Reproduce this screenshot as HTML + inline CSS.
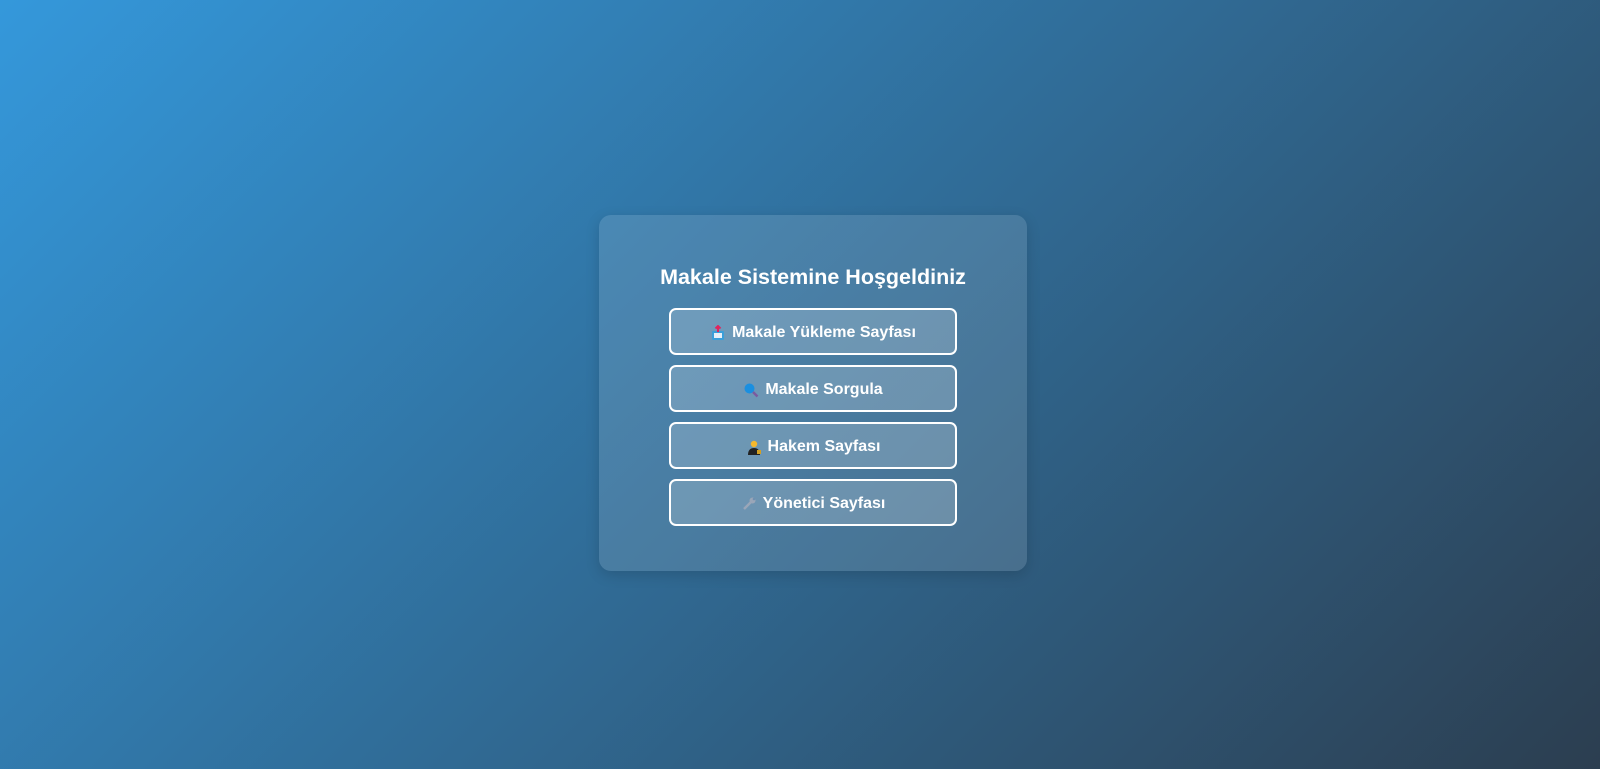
<!DOCTYPE html>
<html><head><meta charset="utf-8"><style>
html,body{margin:0;width:1600px;height:769px;overflow:hidden}
body{background:linear-gradient(135deg,#3498db 0%,#2c3e50 100%);font-family:"Liberation Sans",Arial,sans-serif;position:relative}
.card{position:absolute;left:599px;top:215px;width:428px;height:356px;border-radius:12px;background:rgba(255,255,255,0.12);box-shadow:0 4px 14px rgba(0,0,0,0.15)}
h1{position:absolute;left:599px;width:428px;top:262px;margin:0;text-align:center;color:#fff;font-size:21.5px;font-weight:bold;line-height:30px}
.btn{position:absolute;left:669px;width:284px;height:43px;padding-top:2px;box-sizing:content-box;border:2px solid #fff;border-radius:7px;background:rgba(255,255,255,0.2);color:#fff;font-weight:bold;font-size:16px;display:flex;align-items:center;justify-content:center;gap:6px}
.btn{height:41px}
.btn svg{width:16px;height:16px}
</style></head><body>
<div class="card"></div>
<h1>Makale Sistemine Hoşgeldiniz</h1>
<div class="btn" style="top:308px"><svg viewBox="0 0 16 16"><rect x="2" y="6" width="12" height="9" rx="1" fill="#3b9fd9"/><rect x="4" y="8" width="8" height="5" fill="#e8f0f8"/><path d="M8 1v6M5.5 3.5L8 1l2.5 2.5" stroke="#e0245e" stroke-width="2" fill="none"/></svg>Makale Yükleme Sayfası</div>
<div class="btn" style="top:365px"><svg viewBox="0 0 16 16"><circle cx="6.5" cy="6.5" r="5" fill="#1a8fe0"/><path d="M10 10l4.5 4.5" stroke="#7a5aa0" stroke-width="2.5"/></svg>Makale Sorgula</div>
<div class="btn" style="top:422px"><svg viewBox="0 0 16 16"><circle cx="8" cy="5" r="3.2" fill="#f5b82e"/><path d="M2 16c0-5 2.5-7 6-7s6 2 6 7z" fill="#222"/><rect x="11" y="11" width="4" height="4" fill="#d4a020"/></svg>Hakem Sayfası</div>
<div class="btn" style="top:479px"><svg viewBox="0 0 16 16"><path d="M3 13l7-7" stroke="#9aa6b8" stroke-width="2.5"/><circle cx="11.5" cy="4.5" r="3" fill="#9aa6b8"/><circle cx="13" cy="3" r="1.3" fill="#6f8fb0"/></svg>Yönetici Sayfası</div>
</body></html>
